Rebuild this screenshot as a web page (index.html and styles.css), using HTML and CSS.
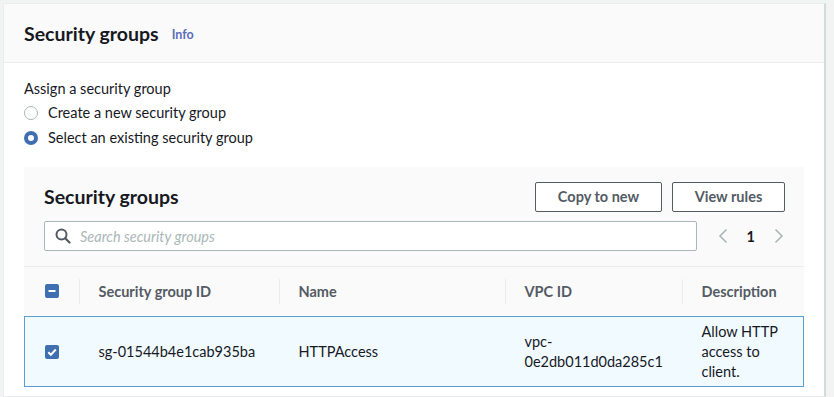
FILE: index.html
```html
<!DOCTYPE html>
<html lang="en">
  <head>
    <meta charset="UTF-8" />
    <title>Security groups</title>
    <link rel="stylesheet" href="styles.css">
  </head>
  <body>
    <div class="card">
      <div class="card-header">
        <h2>Security groups</h2>
        <span class="info">Info</span>
      </div>

      <div class="card-body">
        <div class="field-label">Assign a security group</div>
        <div class="radio-row">
          <span class="radio"></span>
          <span>Create a new security group</span>
        </div>
        <div class="radio-row">
          <span class="radio checked"></span>
          <span>Select an existing security group</span>
        </div>

        <div class="table-box">
          <div class="table-head">
            <div class="title-row">
              <h3>Security groups</h3>
              <div class="actions">
                <button class="btn btn-copy">Copy to new</button>
                <button class="btn btn-rules">View rules</button>
              </div>
            </div>
            <div class="filter-row">
              <div class="search">
                <svg width="16" height="16" viewBox="0 0 16 16">
                  <circle cx="6.5" cy="6.5" r="5" fill="none" stroke="#545b64" stroke-width="2" />
                  <path d="M10.2 10.2 L14.5 14.5" stroke="#545b64" stroke-width="2.2" stroke-linecap="round" />
                </svg>
                <span class="placeholder">Search security groups</span>
              </div>
              <div class="pager">
                <svg width="10" height="16" viewBox="0 0 10 16">
                  <path d="M8.5 1.5 L2 8 L8.5 14.5" fill="none" stroke="#aab7b8" stroke-width="1.6" />
                </svg>
                <span class="page">1</span>
                <svg width="10" height="16" viewBox="0 0 10 16">
                  <path d="M1.5 1.5 L8 8 L1.5 14.5" fill="none" stroke="#aab7b8" stroke-width="1.6" />
                </svg>
              </div>
            </div>
          </div>

          <table>
            <thead>
              <tr>
                <th class="col-check">
                  <svg class="box" width="14" height="14" viewBox="0 0 14 14">
                    <rect width="14" height="14" rx="2" fill="#3f6fb1" />
                    <path d="M3.5 7 H10.5" stroke="#fff" stroke-width="2" />
                  </svg>
                </th>
                <th class="col-id"><span class="sep"></span>Security group ID</th>
                <th class="col-name"><span class="sep"></span>Name</th>
                <th class="col-vpc"><span class="sep"></span>VPC ID</th>
                <th class="col-desc"><span class="sep"></span>Description</th>
              </tr>
            </thead>
            <tbody>
              <tr class="selected">
                <td class="col-check">
                  <svg class="box" width="14" height="14" viewBox="0 0 14 14">
                    <rect width="14" height="14" rx="2" fill="#3f6fb1" />
                    <path d="M3.3 7.2 L5.9 9.8 L10.8 4.5" fill="none" stroke="#fff" stroke-width="2" />
                  </svg>
                </td>
                <td>sg-01544b4e1cab935ba</td>
                <td>HTTPAccess</td>
                <td>vpc-<br />0e2db011d0da285c1</td>
                <td>Allow HTTP access to client.</td>
              </tr>
            </tbody>
          </table>
        </div>
      </div>
    </div>
  </body>
</html>
```

FILE: styles.css
```css
* {
  margin: 0;
  padding: 0;
  box-sizing: border-box;
  font-family: Lato, "Open Sans", sans-serif;
}

body {
  background-color: #f2f3f3;
  color: #16191f;
  font-size: 14.5px;
  padding: 3px 8px 0 3px;
  height: 397px;
  overflow: hidden;
}

.card {
  background-color: #fff;
  border: 1px solid #eaeded;
  border-right: 2px solid #d5dbdb;
  height: 100%;
}

.card-header {
  background-color: #fafafa;
  border-bottom: 1px solid #eaeded;
  height: 59px;
  padding: 0 20px;
  display: flex;
  align-items: center;
  gap: 13px;
}

.card-header h2 {
  font-size: 19.5px;
  font-weight: 700;
}

.info {
  color: #5b6cb8;
  font-size: 12.5px;
  font-weight: 700;
  margin-top: 2px;
}

.card-body {
  padding: 14px 20px 0 20px;
}

.field-label {
  line-height: 23px;
}

.radio-row {
  display: flex;
  align-items: center;
  gap: 10px;
  height: 25px;
}

.radio {
  width: 14px;
  height: 14px;
  border-radius: 50%;
  border: 1.5px solid #aab7b8;
  background: #fff;
}

.radio.checked {
  border: 4px solid #3f6fb1;
}

.table-box {
  margin-top: 17px;
  background-color: #fafafa;
}

.table-head {
  padding: 14px 20px 15px 20px;
  border-bottom: 1px solid #eaeded;
}

.title-row {
  display: flex;
  align-items: center;
  justify-content: space-between;
  height: 30px;
  padding-top: 1px;
}

.title-row h3 {
  font-size: 19.5px;
  font-weight: 700;
}

.actions {
  display: flex;
  gap: 10px;
  margin-right: -1px;
}

.btn {
  height: 30px;
  background: #fff;
  border: 1px solid #545b64;
  border-radius: 2px;
  color: #545b64;
  font-size: 14.5px;
  font-weight: 700;
}

.btn-copy {
  width: 127px;
}

.btn-rules {
  width: 113px;
}

.filter-row {
  display: flex;
  align-items: center;
  margin-top: 10px;
  gap: 21px;
}

.search {
  flex: 1;
  height: 30px;
  background: #fff;
  border: 1px solid #aab7b8;
  border-radius: 2px;
  display: flex;
  align-items: center;
  gap: 9px;
  padding-left: 10px;
}

.placeholder {
  color: #aab7b8;
  font-style: italic;
}

.pager {
  display: flex;
  align-items: center;
  gap: 19px;
}

.page {
  font-weight: 700;
}

table {
  width: 100%;
  border-collapse: collapse;
  table-layout: fixed;
}

th {
  position: relative;
  height: 49px;
  text-align: left;
  color: #545b64;
  font-weight: 700;
  padding-left: 20px;
}

.sep {
  position: absolute;
  left: 0;
  top: 12px;
  height: 25px;
  border-left: 1px solid #eaeded;
}

.col-check {
  width: 54px;
}

.col-id {
  width: 200px;
}

.col-name {
  width: 226px;
}

.col-vpc {
  width: 177px;
}

th.col-check,
td.col-check {
  padding-left: 20px;
}

.box {
  display: block;
}

td {
  padding: 5px 8px 4px 20px;
  line-height: 20px;
}

tbody tr {
  background: #fff;
}

tr.selected {
  background: #f1faff;
  border: 1px solid #5d9ed1;
}
```
